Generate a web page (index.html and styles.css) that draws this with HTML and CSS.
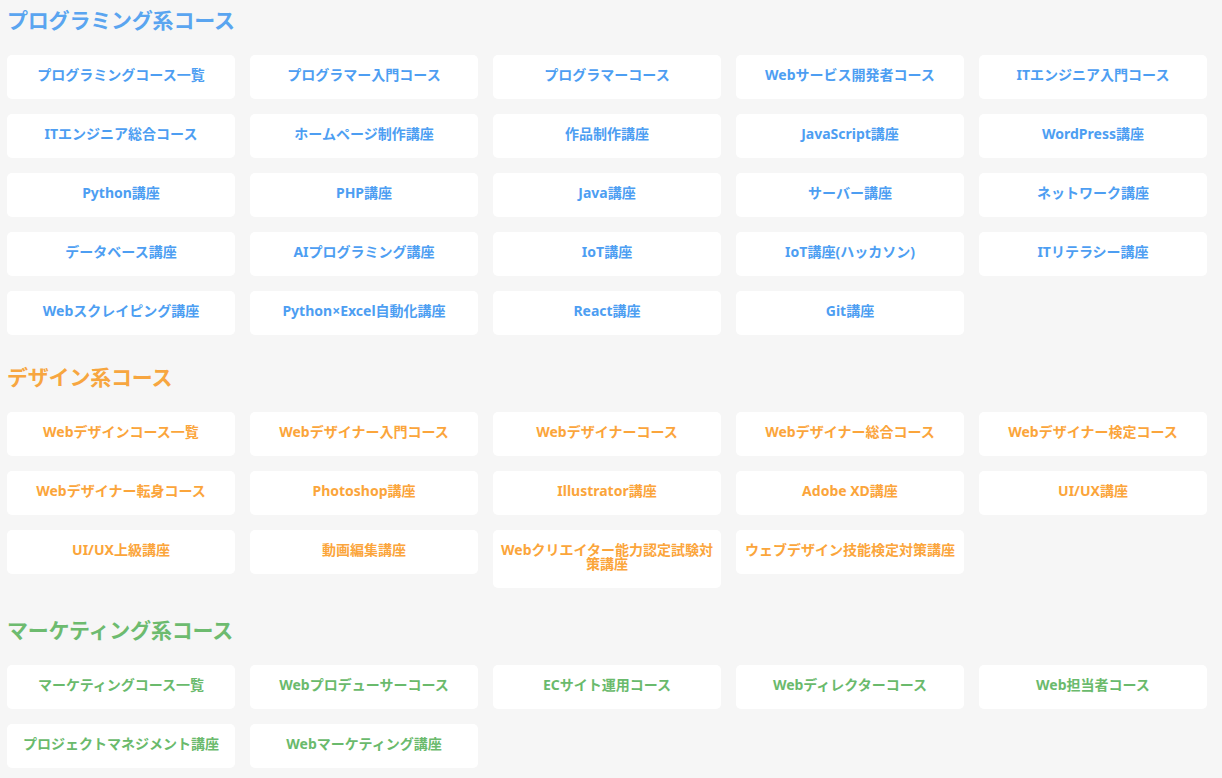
FILE: index.html
```html
<!DOCTYPE html>
<html lang="ja">
<head>
<meta charset="utf-8">
<title>コース一覧</title>
<link rel="stylesheet" href="styles.css">
</head>
<body>
<main class="page">
  <section class="section section--blue">
    <h2 class="section-title">プログラミング系コース</h2>
    <ul class="course-grid">
      <li class="course-card">プログラミングコース一覧</li>
      <li class="course-card">プログラマー入門コース</li>
      <li class="course-card">プログラマーコース</li>
      <li class="course-card">Webサービス開発者コース</li>
      <li class="course-card">ITエンジニア入門コース</li>
      <li class="course-card">ITエンジニア総合コース</li>
      <li class="course-card">ホームページ制作講座</li>
      <li class="course-card">作品制作講座</li>
      <li class="course-card">JavaScript講座</li>
      <li class="course-card">WordPress講座</li>
      <li class="course-card">Python講座</li>
      <li class="course-card">PHP講座</li>
      <li class="course-card">Java講座</li>
      <li class="course-card">サーバー講座</li>
      <li class="course-card">ネットワーク講座</li>
      <li class="course-card">データベース講座</li>
      <li class="course-card">AIプログラミング講座</li>
      <li class="course-card">IoT講座</li>
      <li class="course-card">IoT講座(ハッカソン)</li>
      <li class="course-card">ITリテラシー講座</li>
      <li class="course-card">Webスクレイピング講座</li>
      <li class="course-card">Python×Excel自動化講座</li>
      <li class="course-card">React講座</li>
      <li class="course-card">Git講座</li>
    </ul>
  </section>
  <section class="section section--orange">
    <h2 class="section-title">デザイン系コース</h2>
    <ul class="course-grid">
      <li class="course-card">Webデザインコース一覧</li>
      <li class="course-card">Webデザイナー入門コース</li>
      <li class="course-card">Webデザイナーコース</li>
      <li class="course-card">Webデザイナー総合コース</li>
      <li class="course-card">Webデザイナー検定コース</li>
      <li class="course-card">Webデザイナー転身コース</li>
      <li class="course-card">Photoshop講座</li>
      <li class="course-card">Illustrator講座</li>
      <li class="course-card">Adobe XD講座</li>
      <li class="course-card">UI/UX講座</li>
      <li class="course-card">UI/UX上級講座</li>
      <li class="course-card">動画編集講座</li>
      <li class="course-card">Webクリエイター能力認定試験対策講座</li>
      <li class="course-card">ウェブデザイン技能検定対策講座</li>
    </ul>
  </section>
  <section class="section section--green">
    <h2 class="section-title">マーケティング系コース</h2>
    <ul class="course-grid">
      <li class="course-card">マーケティングコース一覧</li>
      <li class="course-card">Webプロデューサーコース</li>
      <li class="course-card">ECサイト運用コース</li>
      <li class="course-card">Webディレクターコース</li>
      <li class="course-card">Web担当者コース</li>
      <li class="course-card">プロジェクトマネジメント講座</li>
      <li class="course-card">Webマーケティング講座</li>
    </ul>
  </section>
</main>
</body>
</html>
```

FILE: styles.css
```css
html, body {
  margin: 0;
  padding: 0;
  background: #f6f6f6;
}

body {
  font-family: "Noto Sans", "Noto Sans CJK JP", sans-serif;
}

.page {
  width: 1200px;
  padding: 5px 15px 20px 7px;
}

.section + .section {
  margin-top: 27px;
}

.section-title {
  margin: 0 0 20px;
  font-size: 21px;
  line-height: 30px;
  font-weight: 700;
  letter-spacing: -0.2px;
}

.course-grid {
  list-style: none;
  margin: 0;
  padding: 0;
  display: grid;
  grid-template-columns: repeat(5, 228px);
  column-gap: 15px;
  row-gap: 15px;
  align-items: start;
}

.course-card {
  background: #ffffff;
  border-radius: 5px;
  padding: 13px 6px 17px;
  font-size: 14px;
  line-height: 14px;
  font-weight: 700;
  text-align: center;
}

.section--blue { color: #4d9ef2; }
.section--blue .section-title { color: #5aa5f0; }

.section--orange { color: #fba53b; }
.section--orange .section-title { color: #f7a640; }

.section--green { color: #6aba6c; }
.section--green .section-title { color: #6dbb6f; }
```
